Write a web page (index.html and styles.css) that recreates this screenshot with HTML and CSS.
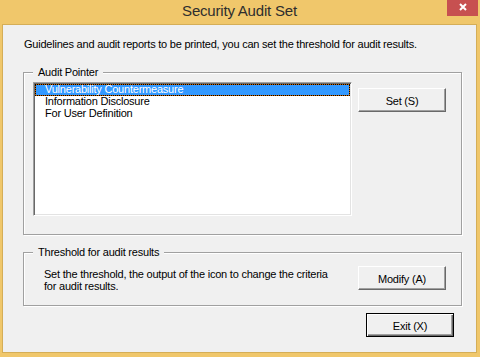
FILE: index.html
```html
<!DOCTYPE html>
<html lang="en">
<head>
    <meta charset="UTF-8">
    <meta name="viewport" content="width=device-width, initial-scale=1.0">
    <title>Security Audit Set</title>
    <link rel="stylesheet" href="styles.css">
</head>
<body>
    <div class="window">
        <div class="titlebar">
            <div class="title">Security Audit Set</div>
            <button class="close-btn" title="Close">
                <svg viewBox="0 0 8 8" width="8" height="8">
                    <path d="M1 1L7 7M7 1L1 7"/>
                </svg>
            </button>
        </div>

        <div class="client">
            <p class="intro">Guidelines and audit reports to be printed, you can set the threshold for audit results.</p>

            <fieldset class="group group-pointer">
                <legend>Audit Pointer</legend>
                <div class="group-row">
                    <ul class="listbox">
                        <li class="selected">Vulnerability Countermeasure</li>
                        <li>Information Disclosure</li>
                        <li>For User Definition</li>
                    </ul>
                    <button class="btn btn-set">Set (S)</button>
                </div>
            </fieldset>

            <fieldset class="group group-threshold">
                <legend>Threshold for audit results</legend>
                <div class="group-row">
                    <p class="threshold-text">Set the threshold, the output of the icon to change the criteria for audit results.</p>
                    <button class="btn btn-modify">Modify (A)</button>
                </div>
            </fieldset>

            <div class="footer">
                <button class="btn btn-default">Exit (X)</button>
            </div>
        </div>
    </div>
</body>
</html>
```

FILE: styles.css
```css
* {
    margin: 0;
    padding: 0;
    box-sizing: border-box;
}

body {
    font-family: "Liberation Sans", Arial, sans-serif;
    font-size: 11px;
    letter-spacing: -0.22px;
    color: #000;
    background: #F0C76B;
}

.window {
    width: 480px;
    height: 357px;
    display: flex;
    flex-direction: column;
    padding: 0 3px 4px 2px;
    background: #F0C76B;
}

/* title bar */
.titlebar {
    height: 24px;
    display: grid;
    grid-template-columns: 1fr auto 1fr;
}

.title {
    grid-column: 2;
    font-size: 15px;
    letter-spacing: -0.2px;
    line-height: 18px;
    padding-top: 2px;
    color: #2E2E2E;
}

.close-btn {
    grid-column: 3;
    justify-self: end;
    align-self: start;
    width: 31px;
    height: 16px;
    margin-right: -1px;
    padding-top: 3px;
    border: none;
    background: #C75050;
    display: flex;
    justify-content: center;
    align-items: flex-start;
}

.close-btn svg {
    fill: none;
    stroke: #fff;
    stroke-width: 2;
}

/* dialog body */
.client {
    flex: 1;
    display: flex;
    flex-direction: column;
    padding: 13px 14px 0 20px;
    border: 1px solid #D5AE57;
    background: #F0F0F0;
}

.intro {
    line-height: 13px;
    margin: 0 0 15px 1px;
}

.group {
    width: 439px;
    min-width: 0;
    border: 1px solid #A0A0A0;
    box-shadow: inset 1px 1px 0 #fff, 1px 1px 0 #fff;
    padding: 3px 15px 18px 9px;
}

.group legend {
    padding: 0 5px;
    line-height: 13px;
    background: #F0F0F0;
}

.group-row {
    display: flex;
    align-items: flex-start;
    gap: 6px;
}

.listbox {
    list-style: none;
    width: 319px;
    height: 134px;
    padding: 1px;
    background: #fff;
    border: 1px solid;
    border-color: #A0A0A0 #fff #fff #A0A0A0;
    box-shadow: inset 1px 1px 0 #696969, inset -1px -1px 0 #E3E3E3;
}

.listbox li {
    height: 12px;
    line-height: 8px;
    padding-left: 9px;
    border: 1px solid transparent;
    white-space: nowrap;
}

.listbox li.selected {
    color: #fff;
    border: 1px dotted #000;
    background: linear-gradient(#3399FF, #3399FF) padding-box, #CC6600;
}

.btn {
    width: 88px;
    height: 24px;
    padding: 2px 0 0;
    font: inherit;
    letter-spacing: inherit;
    line-height: 20px;
    color: #000;
    text-align: center;
    background: #F0F0F0;
    border: 1px solid;
    border-color: #fff #696969 #696969 #fff;
    box-shadow: inset -1px -1px 0 #A0A0A0;
}

.btn-set {
    margin-top: 6px;
}

.group-threshold {
    margin-top: 11px;
    padding-top: 7px;
    padding-bottom: 13px;
}

.threshold-text {
    width: 292px;
    margin: 2px 0 0 11px;
    line-height: 12px;
}

.btn-modify {
    margin-left: auto;
}

.footer {
    display: flex;
    justify-content: flex-end;
    padding-right: 8px;
    margin-top: 7px;
}

.btn-default {
    border: 1px solid #000;
    box-shadow: inset 1px 1px 0 #fff, inset -1px -1px 0 #696969, inset -2px -2px 0 #A0A0A0;
}
```
